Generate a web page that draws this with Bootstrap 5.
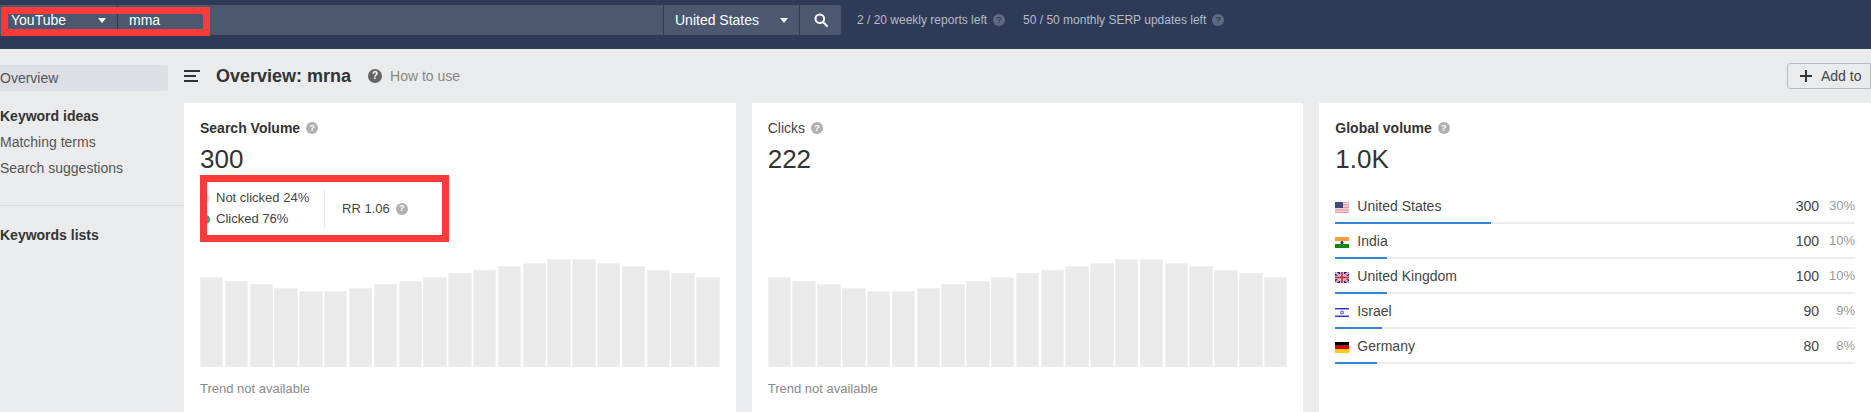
<!DOCTYPE html>
<html lang="en">
<head>
<meta charset="utf-8">
<title>Overview: mrna</title>
<link rel="stylesheet" href="https://cdn.jsdelivr.net/npm/bootstrap@5.3.0/dist/css/bootstrap.min.css">
<style>
html,body{height:412px;overflow:hidden}
body{background:#eaebed;font-family:"Liberation Sans",Arial,sans-serif;font-size:14px;color:#444}
.rk-top{height:49px;background:#2d3b57;padding-top:5px}
.rk-searchbar{width:841px;height:30px;background:#4c5870;border-radius:0 3px 3px 0;color:#fff;line-height:30px}
.rk-sel{width:118px;padding:0 11px;border-right:1px solid #2d3b57}
.rk-kw{width:546px;padding-left:11px;border-right:1px solid #2d3b57}
.rk-country{width:136px;padding:0 11px;border-right:1px solid #2d3b57}
.rk-go{width:41px}
.rk-caret{width:0;height:0;border-left:4px solid transparent;border-right:4px solid transparent;border-top:5px solid #fff}
.rk-quota{font-size:12px;color:#b6bcc8;margin-left:16px;line-height:30px;gap:6px}
.rk-quota+.rk-quota{margin-left:18px}
.rk-redmark{position:absolute;left:1px;top:7px;width:209px;height:29px;border:7px solid #fb3a3a;pointer-events:none}
.rk-help{display:inline-flex;align-items:center;justify-content:center;width:12px;height:12px;border-radius:50%;background:#b0b0b0;color:#fff;font-size:9px;font-weight:700;line-height:1;flex:none}
.rk-help-big{width:14px;height:14px;background:#666;font-size:10px}
.rk-help-top{background:#5f6a81;color:#2d3b57}
.rk-side{width:184px;padding-top:16px;flex:none}
.rk-side a{display:block;line-height:26px;color:#555;text-decoration:none;padding-left:0;width:168px}
.rk-side a.rk-on{background:#dcdfe4;border-radius:0 3px 3px 0}
.rk-side .rk-head{line-height:26px;font-weight:700;color:#333}
.rk-rule{border-top:1px solid #dcdde0;margin:24px 0 16px}
.rk-header{height:54px}
.rk-title{font-size:18px;font-weight:700;color:#333;margin:0 17px 0 16px;line-height:26px}
.rk-howto{color:#888;margin-left:8px}
.rk-add{height:26px;width:84px;padding:0 0 0 12px;border:1px solid #b5b8bd;border-radius:3px 0 0 3px;background:transparent;color:#444;font-size:14px;line-height:24px;display:flex;align-items:center;gap:9px}
.rk-cards{gap:16px}
.rk-panel{flex:1 1 0;min-width:0;height:309px;background:#fff;padding:16px 16px 0;border:0;border-radius:0}
.rk-label{font-size:14px;line-height:18px;color:#444;gap:6px}
.rk-label b{color:#333}
.rk-value{font-size:26px;line-height:30px;margin-top:7px;color:#333}
.rk-callout{height:67px;margin-top:1px;width:249px;border:7px solid #fb3a3a;overflow:hidden;font-size:13px;color:#444}
.rk-slot{height:67px;margin-top:1px}
.rk-split{width:118px;height:38px;border-right:1px solid #e4e4e4}
.rk-lines{margin-top:-3px;line-height:21px}
.rk-dot{display:inline-block;width:9px;height:9px;border-radius:50%;margin:0 6px 0 -6px;vertical-align:-1px}
.rk-dot-off{background:#e2e2e2}
.rk-dot-on{background:#2aa866}
.rk-rr{padding-left:17px;gap:6px}
.rk-chart{height:108px;margin-top:17px;gap:1.4px}
.rk-chart i{display:block;flex:1 1 0;background:#eaeaea;border:1px solid #f0f0f0;border-bottom:0}
.rk-note{font-size:13px;line-height:18px;margin-top:13px;color:#8a8a8a}
.rk-rows{margin-top:15px}
.rk-row{height:35px;padding-top:7px}
.rk-line{height:26px;line-height:20px}
.rk-flag{width:14px;height:11px;margin:6px 8px 0 0;flex:none;display:block}
.rk-num{color:#444}
.rk-pct{width:36px;text-align:right;font-size:13px;color:#999}
.rk-meter{height:2px;border-radius:0;background:#ececec}
.rk-meter .progress-bar{background:#3585d6}
</style>
</head>
<body>
<header class="rk-top position-relative">
  <div class="d-flex align-items-start">
    <div class="rk-searchbar d-flex">
      <div class="rk-sel d-flex align-items-center justify-content-between"><span>YouTube</span><span class="rk-caret"></span></div>
      <div class="rk-kw">mma</div>
      <div class="rk-country d-flex align-items-center justify-content-between"><span>United States</span><span class="rk-caret"></span></div>
      <div class="rk-go d-flex align-items-center justify-content-center">
        <svg width="14" height="14" viewBox="0 0 14 14" fill="none" stroke="#fff" stroke-width="2"><circle cx="5.8" cy="5.8" r="4.3"/><path d="M9 9l4 4" stroke-linecap="round"/></svg>
      </div>
    </div>
    <div class="rk-quota d-flex align-items-center"><span>2 / 20 weekly reports left</span><span class="rk-help rk-help-top">?</span></div>
    <div class="rk-quota d-flex align-items-center"><span>50 / 50 monthly SERP updates left</span><span class="rk-help rk-help-top">?</span></div>
  </div>
  <div class="rk-redmark"></div>
</header>
<div class="d-flex">
  <nav class="rk-side">
    <a href="#" class="rk-on">Overview</a>
    <div class="rk-head mt-2 pt-1">Keyword ideas</div>
    <a href="#">Matching terms</a>
    <a href="#">Search suggestions</a>
    <div class="rk-rule"></div>
    <div class="rk-head">Keywords lists</div>
  </nav>
  <main class="flex-grow-1 overflow-hidden">
    <div class="rk-header d-flex align-items-center">
      <svg width="16" height="12" viewBox="0 0 16 12" fill="#333"><rect width="16" height="2"/><rect y="5" width="12" height="2"/><rect y="10" width="14" height="2"/></svg>
      <h1 class="rk-title">Overview: mrna</h1>
      <span class="rk-help rk-help-big">?</span>
      <span class="rk-howto">How to use</span>
      <button type="button" class="rk-add btn ms-auto"><svg width="12" height="12" viewBox="0 0 12 12" fill="#333"><rect x="5" width="2" height="12"/><rect y="5" width="12" height="2"/></svg>Add to</button>
    </div>
    <div class="rk-cards d-flex">
      <section class="rk-panel card">
        <div class="rk-label d-flex align-items-center"><b>Search Volume</b><span class="rk-help">?</span></div>
        <div class="rk-value">300</div>
        <div class="rk-callout d-flex align-items-center">
          <div class="rk-split">
            <div class="rk-lines">
              <div><span class="rk-dot rk-dot-off"></span>Not clicked 24%</div>
              <div><span class="rk-dot rk-dot-on"></span>Clicked 76%</div>
            </div>
          </div>
          <div class="rk-rr d-flex align-items-center"><span>RR 1.06</span><span class="rk-help">?</span></div>
        </div>
        <div class="rk-chart d-flex align-items-end">
          <i style="height:90px"></i><i style="height:86px"></i><i style="height:83px"></i><i style="height:79px"></i><i style="height:76px"></i><i style="height:76px"></i><i style="height:79px"></i><i style="height:83px"></i><i style="height:86px"></i><i style="height:90px"></i><i style="height:94px"></i><i style="height:97px"></i><i style="height:101px"></i><i style="height:104px"></i><i style="height:108px"></i><i style="height:108px"></i><i style="height:104px"></i><i style="height:101px"></i><i style="height:97px"></i><i style="height:94px"></i><i style="height:90px"></i>
        </div>
        <div class="rk-note">Trend not available</div>
      </section>
      <section class="rk-panel card">
        <div class="rk-label d-flex align-items-center"><span>Clicks</span><span class="rk-help">?</span></div>
        <div class="rk-value">222</div>
        <div class="rk-slot"></div>
        <div class="rk-chart d-flex align-items-end">
          <i style="height:90px"></i><i style="height:86px"></i><i style="height:83px"></i><i style="height:79px"></i><i style="height:76px"></i><i style="height:76px"></i><i style="height:79px"></i><i style="height:83px"></i><i style="height:86px"></i><i style="height:90px"></i><i style="height:94px"></i><i style="height:97px"></i><i style="height:101px"></i><i style="height:104px"></i><i style="height:108px"></i><i style="height:108px"></i><i style="height:104px"></i><i style="height:101px"></i><i style="height:97px"></i><i style="height:94px"></i><i style="height:90px"></i>
        </div>
        <div class="rk-note">Trend not available</div>
      </section>
      <section class="rk-panel card">
        <div class="rk-label d-flex align-items-center"><b>Global volume</b><span class="rk-help">?</span></div>
        <div class="rk-value">1.0K</div>
        <div class="rk-rows">
          <div class="rk-row">
            <div class="rk-line d-flex"><svg class="rk-flag" viewBox="0 0 14 11"><rect width="14" height="11" fill="#fff"/><path d="M0 .8h14M0 2.4h14M0 4h14M0 5.6h14M0 7.2h14M0 8.8h14M0 10.4h14" stroke="#d9828c" stroke-width=".9"/><rect width="8" height="6" fill="#3f4d7e"/></svg><span>United States</span><span class="ms-auto rk-num">300</span><span class="rk-pct">30%</span></div>
            <div class="progress rk-meter"><div class="progress-bar" style="width:30%"></div></div>
          </div>
          <div class="rk-row">
            <div class="rk-line d-flex"><svg class="rk-flag" viewBox="0 0 14 11"><rect width="14" height="4" fill="#ff9c3c"/><rect y="4" width="14" height="3" fill="#fff"/><rect y="7" width="14" height="4" fill="#128807"/><circle cx="7" cy="5.5" r="1.5" fill="#1a2a80"/></svg><span>India</span><span class="ms-auto rk-num">100</span><span class="rk-pct">10%</span></div>
            <div class="progress rk-meter"><div class="progress-bar" style="width:10%"></div></div>
          </div>
          <div class="rk-row">
            <div class="rk-line d-flex"><svg class="rk-flag" viewBox="0 0 14 11"><rect width="14" height="11" fill="#14147a"/><path d="M0 0l14 11M14 0L0 11" stroke="#fff" stroke-width="2"/><path d="M0 0l14 11M14 0L0 11" stroke="#d8283c" stroke-width=".8"/><path d="M7 0v11M0 5.5h14" stroke="#fff" stroke-width="3.4"/><path d="M7 0v11M0 5.5h14" stroke="#d8283c" stroke-width="1.8"/></svg><span>United Kingdom</span><span class="ms-auto rk-num">100</span><span class="rk-pct">10%</span></div>
            <div class="progress rk-meter"><div class="progress-bar" style="width:10%"></div></div>
          </div>
          <div class="rk-row">
            <div class="rk-line d-flex"><svg class="rk-flag" viewBox="0 0 14 11"><rect width="14" height="11" fill="#fff"/><rect y="1" width="14" height="1.4" fill="#2a2ad8"/><rect y="8.6" width="14" height="1.4" fill="#2a2ad8"/><path d="M7 3.4L8.8 6.6H5.2zM7 7.6L5.2 4.4H8.8z" fill="none" stroke="#5a5ae0" stroke-width=".6"/></svg><span>Israel</span><span class="ms-auto rk-num">90</span><span class="rk-pct">9%</span></div>
            <div class="progress rk-meter"><div class="progress-bar" style="width:9%"></div></div>
          </div>
          <div class="rk-row">
            <div class="rk-line d-flex"><svg class="rk-flag" viewBox="0 0 14 11"><rect width="14" height="3.7" fill="#000"/><rect y="3.7" width="14" height="3.7" fill="#d80000"/><rect y="7.4" width="14" height="3.6" fill="#ffce00"/></svg><span>Germany</span><span class="ms-auto rk-num">80</span><span class="rk-pct">8%</span></div>
            <div class="progress rk-meter"><div class="progress-bar" style="width:8%"></div></div>
          </div>
        </div>
      </section>
    </div>
  </main>
</div>
<script src="https://cdn.jsdelivr.net/npm/bootstrap@5.3.0/dist/js/bootstrap.bundle.min.js"></script>
</body>
</html>
